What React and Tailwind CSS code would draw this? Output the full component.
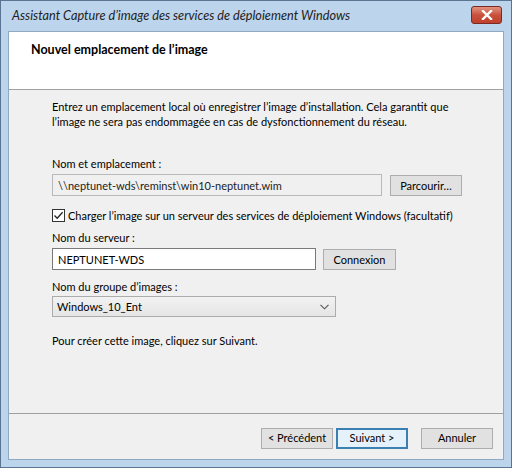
import { useState } from "react";

export default function App() {
  const [upload, setUpload] = useState(true);
  const [server, setServer] = useState("NEPTUNET-WDS");

  return (
    <div
      className="w-[512px] h-[468px] flex flex-col bg-[#bcd4ec] border border-[#5a7591] text-[11px] text-black whitespace-nowrap"
      style={{ fontFamily: 'Lato, "Liberation Sans", sans-serif' }}
    >
      {/* title bar */}
      <div className="h-[30px] flex items-center pl-[11px] pr-[9px] shrink-0">
        <span className="italic text-[12.7px] text-[#222] flex-1">
          Assistant Capture d’image des services de déploiement Windows
        </span>
        <button className="w-[31px] h-[18px] mt-[-3px] rounded-[3px] border border-[#7a2a22] bg-gradient-to-b from-[#e0937f] via-[#c8513c] to-[#c0402c] flex items-center justify-center">
          <svg width="12" height="10" viewBox="0 0 12 10">
            <path d="M2 1 L10 9 M10 1 L2 9" stroke="#fff" strokeWidth="2.4" strokeLinecap="square" />
          </svg>
        </button>
      </div>

      {/* client area */}
      <div className="flex-1 mx-[7px] mb-[7px] flex flex-col bg-[#f0f0f0] border border-[#8ea9c4]">
        <div className="h-[58px] bg-white border-b border-[#a0a0a0] pl-[22px] pt-[9px] shrink-0">
          <div className="font-bold text-[12.5px]">Nouvel emplacement de l’image</div>
        </div>

        <div className="flex-1 pl-[43px] pr-[20px] pt-[9px] flex flex-col leading-[15px]">
          <p>
            Entrez un emplacement local où enregistrer l’image d’installation. Cela garantit que
            <br />
            l’image ne sera pas endommagée en cas de dysfonctionnement du réseau.
          </p>

          <div className="mt-[27px]">Nom et emplacement :</div>
          <div className="mt-[3px] flex items-center">
            <div className="w-[330px] h-[22px] border border-[#b9b9b9] bg-[#f0f0f0] pl-[5px] flex items-center text-[#222]">
              \\neptunet-wds\reminst\win10-neptunet.wim
            </div>
            <button className="ml-[8px] w-[72px] h-[21px] border border-[#adadad] bg-[#e1e1e1] flex items-center justify-center">
              Parcourir…
            </button>
          </div>

          <label className="mt-[12px] flex items-center cursor-default">
            <span
              onClick={() => setUpload(!upload)}
              className="w-[13px] h-[13px] border border-[#333] bg-white flex items-center justify-center shrink-0"
            >
              {upload && (
                <svg width="11" height="11" viewBox="0 0 11 11">
                  <path d="M1.5 5.5 L4.2 8.3 L9.6 2.2" fill="none" stroke="#222" strokeWidth="1.3" />
                </svg>
              )}
            </span>
            <span className="ml-[3px]">
              Charger l’image sur un serveur des services de déploiement Windows (facultatif)
            </span>
          </label>

          <div className="mt-[7px]">Nom du serveur :</div>
          <div className="mt-[3px] flex items-center">
            <input
              value={server}
              onChange={(e) => setServer(e.target.value)}
              className="w-[264px] h-[22px] border border-[#7a7a7a] bg-white pl-[5px] outline-none text-black"
            />
            <button className="ml-[7px] w-[73px] h-[21px] border border-[#adadad] bg-[#e1e1e1] flex items-center justify-center">
              Connexion
            </button>
          </div>

          <div className="mt-[9px]">Nom du groupe d’images :</div>
          <div className="mt-[2px] w-[284px] h-[21px] border border-[#acacac] bg-gradient-to-b from-[#f2f2f2] to-[#e5e5e5] pl-[4px] pr-[6px] flex items-center justify-between">
            <span>Windows_10_Ent</span>
            <svg width="9" height="6" viewBox="0 0 9 6">
              <path d="M0.5 0.8 L4.5 4.8 L8.5 0.8" fill="none" stroke="#555" strokeWidth="1.1" />
            </svg>
          </div>

          <div className="mt-[16px]">Pour créer cette image, cliquez sur Suivant.</div>
        </div>

        <div className="h-[46px] border-t border-[#a0a0a0] shrink-0 flex items-start justify-end pt-[14px] pr-[10px]">
          <button className="w-[72px] h-[21px] border border-[#adadad] bg-[#e1e1e1] flex items-center justify-center">
            &lt; Précédent
          </button>
          <button className="ml-[3px] w-[72px] h-[21px] border-2 border-[#3c7fb1] bg-[#e5f1fb] flex items-center justify-center">
            Suivant &gt;
          </button>
          <button className="ml-[13px] w-[72px] h-[21px] border border-[#adadad] bg-[#e1e1e1] flex items-center justify-center">
            Annuler
          </button>
        </div>
      </div>
    </div>
  );
}
